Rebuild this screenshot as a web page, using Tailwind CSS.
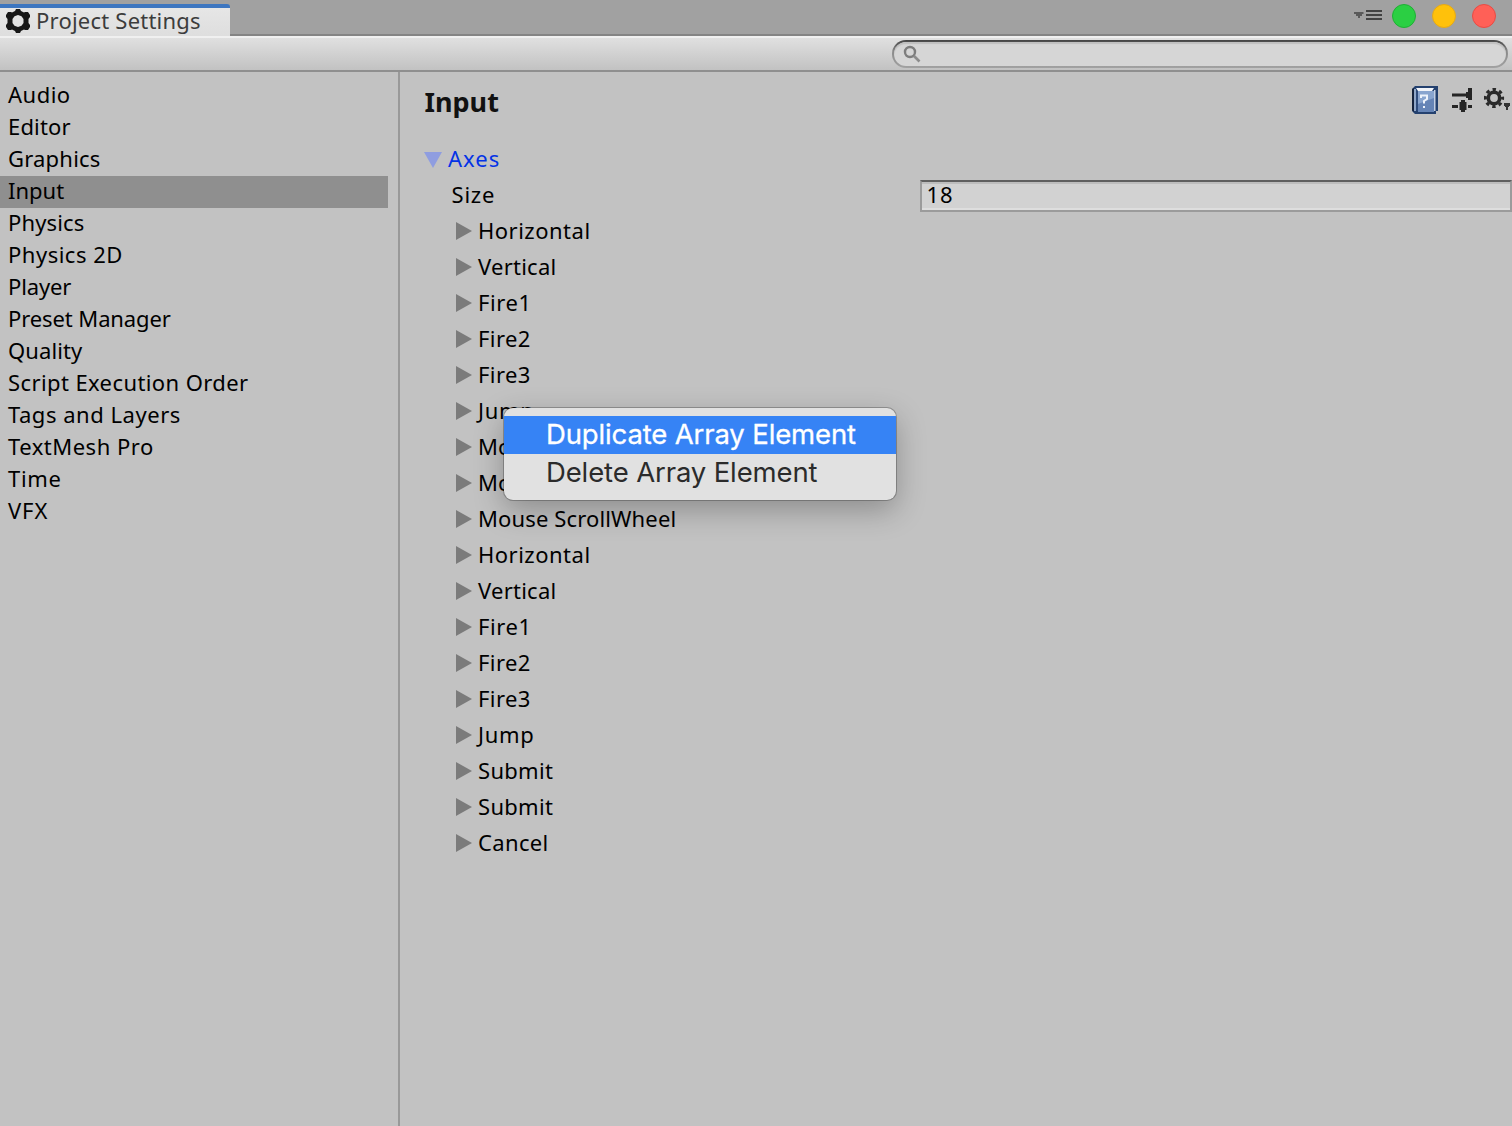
<!DOCTYPE html>
<html lang="en">
<head>
<meta charset="utf-8">
<title>Project Settings</title>
<script src="https://cdn.jsdelivr.net/npm/@tailwindcss/browser@4"></script>
</head>
<body class="flex h-[1126px] w-[1512px] flex-col overflow-hidden bg-[#c2c2c2] font-['Noto_Sans',sans-serif] text-[22px] text-black">

<!-- Tab bar -->
<header class="flex h-9 shrink-0 items-end justify-between bg-[#a1a1a1] shadow-[inset_0_-2px_0_#848484]">
  <div class="flex h-8 w-[230px] items-start rounded-tr-[3px] border-t-4 border-[#3d76c0] bg-linear-to-b from-[#e6e6e6] to-[#dedede] pl-1.5 text-[#3c3c3c]">
    <svg class="mt-px h-6 w-6 shrink-0" viewBox="0 0 24 24"><path fill="#171717" fill-rule="evenodd" d="M10 0h4l1 2 3 1.500 1-.5h3l2 3v2l-1.500 2v4l1.500 2v2l-2 3h-3l-1-.5L15 22l-1 2h-4l-1-2-3-1.500-1 .5H2l-2-3v-2l1.500-2v-4L0 8V6l2-3h3l1 .5L9 2zM12 6L8.500 7.200 6.500 10v4l2 2.800L12 18l3.500-1.200 2-2.800v-4l-2-2.800z"/></svg>
    <span class="ml-1.5 leading-[24px] tracking-[.22px] whitespace-nowrap">Project Settings</span>
  </div>
  <div class="flex h-9 items-start pt-1 pr-4">
    <svg class="mt-[5px] mr-[10px] h-3 w-7" viewBox="0 0 28 12"><path fill="#5a5a5a" d="M0 3h9.500v2H8v2H6v2H4V7H2V5H0z"/><path fill="#424242" d="M12 1h16v2H12zM12 5h16v2H12zM12 9h16v2H12z"/></svg>
    <div class="mr-4 h-6 w-6 rounded-full border border-[#1fb034] bg-[#2bcf43]"></div>
    <div class="mr-4 h-6 w-6 rounded-full border border-[#e5a917] bg-[#ffc10b]"></div>
    <div class="h-6 w-6 rounded-full border border-[#e84b44] bg-[#ff6057]"></div>
  </div>
</header>

<!-- Toolbar with search -->
<div class="flex h-9 shrink-0 items-start justify-end border-t-2 border-b-2 border-t-[#f0f0f0] border-b-[#8f8f8f] bg-linear-to-b from-[#e0e0e0] to-[#c2c2c2] pt-0.5 pr-1">
  <div class="h-7 w-[616px] rounded-full bg-linear-to-b from-[#454545] via-[#8a8a8a] via-40% to-[#a2a2a2] p-0.5">
    <div class="flex h-6 items-start rounded-full bg-[#d6d6d6] pt-[3px] pl-[9px] shadow-[inset_0_2px_1px_#c0c0c0]">
      <svg class="h-[18px] w-[18px]" viewBox="0 0 18 18" fill="none"><circle cx="7" cy="7" r="5" stroke="#7d7d7d" stroke-width="2.400"/><path d="M11 11l5.500 5.500" stroke="#8c8c8c" stroke-width="2.600"/></svg>
    </div>
  </div>
</div>

<div class="flex grow">
  <!-- Categories -->
  <nav class="w-[400px] shrink-0 border-r-2 border-[#999] pt-2 leading-[29px] whitespace-nowrap *:h-8 *:w-[388px] *:pl-2">
    <div class="tracking-[.5px]">Audio</div>
    <div class="tracking-[.15px]">Editor</div>
    <div class="tracking-[.2px]">Graphics</div>
    <div class="bg-[#8f8f8f]">Input</div>
    <div class="tracking-[.15px]">Physics</div>
    <div class="tracking-[.5px]">Physics 2D</div>
    <div class="tracking-[-.15px]">Player</div>
    <div class="tracking-[-.1px]">Preset Manager</div>
    <div class="tracking-[.1px]">Quality</div>
    <div class="tracking-[.4px]">Script Execution Order</div>
    <div class="tracking-[.53px]">Tags and Layers</div>
    <div class="tracking-[.5px]">TextMesh Pro</div>
    <div class="tracking-[.7px]">Time</div>
    <div class="tracking-[.9px]">VFX</div>
  </nav>

  <!-- Inspector -->
  <main class="grow">
    <div class="flex h-[69px] items-start justify-between pr-0.5 pl-[24.500px]">
      <h1 class="mt-3 text-[27px] leading-9 font-bold text-[#111]">Input</h1>
      <div class="mt-3.5 flex items-start">
        <svg class="mr-3.5 h-7 w-[26px]" viewBox="0 0 26 28">
          <path fill="#24416f" d="M0 3l3-3h23v25h-2v3H3l-3-3z"/>
          <path fill="#15233d" d="M0 3l2-1v24l-2-2z"/>
          <path fill="#8fa6c8" d="M2 3h2v22H2z"/>
          <path fill="#f1f4f9" d="M4 2h18l-2 3H6z"/>
          <path fill="#2d4b7c" d="M4 4l3 2v20l-3-2z"/>
          <path fill="#6584b6" d="M6 5h16v21H6z"/>
          <path fill="#89a5cf" d="M6 5h16v7L6 18z"/>
          <path fill="#c3d0e4" d="M22 4h1.500v21H22z"/>
          <path fill="none" stroke="#eef3fb" stroke-width="2" d="M9 12V9.500h6V13l-3 2v2.500M11 21h2"/>
        </svg>
        <svg class="mt-0.5 mr-3 h-6 w-5" viewBox="0 0 20 24"><g fill="#252525"><path d="M0 5.500h14v3H0zM16 0h4v12h-4zM14 4h2v6h-2zM0 17h6v3H0zM9 12h4v12H9zM7.500 14h7v8h-7zM16 17h4v3h-4z"/></g></svg>
        <svg class="mt-0.5 h-6 w-[26px]" viewBox="0 0 26 24"><g fill="none" stroke="#2a2a2a"><circle cx="10" cy="10" r="5.700" stroke-width="3.600"/><circle cx="10" cy="10" r="8.600" stroke-width="3" stroke-dasharray="3.400 3.354" stroke-dashoffset="1.700"/></g><path fill="#333" d="M20 15h6v3h-1v1h-1v3h-2v-3h-1v-1h-1z"/></svg>
      </div>
    </div>

    <div class="leading-[35px] whitespace-nowrap">
      <div class="flex h-9 pl-6 tracking-[1px] text-[#0433e6]"><svg class="mt-[11px] mr-1.5 h-4 w-[18px]" viewBox="0 0 18 16"><path fill="#8f9de0" d="M0 0h18L9 16z"/></svg>Axes</div>
      <div class="flex h-9 pl-[51.500px]">
        <div class="w-[468.500px] tracking-[.8px]">Size</div>
        <div class="mt-[3px] h-8 grow border-2 border-[#9b9b9b] border-t-[#5f5f5f] bg-[#d2d2d2] pl-[4.500px] leading-[25px] tracking-[1px] shadow-[inset_0_2px_0_#bdbdbd,inset_0_-2px_0_#dedede]">18</div>
      </div>
      <div id="axes"></div>
    </div>
  </main>
</div>

<!-- Context menu -->
<div class="absolute top-[408px] left-[504px] h-[92px] w-[392px] overflow-hidden rounded-[9px] bg-[#e1e1e1] pt-2 font-[Inter,sans-serif] text-[27.500px] leading-9 whitespace-nowrap *:h-[38px] *:pl-[42px]">
  <div class="bg-[#3683f5] tracking-[-.14px] text-white [-webkit-text-stroke:.3px_white]">Duplicate Array Element</div>
  <div class="tracking-[-.13px] text-[#2b2b2b]">Delete Array Element</div>
</div>
<div class="absolute top-[408px] left-[504px] h-[92px] w-[392px] rounded-[9px] shadow-[0_0_0_1px_rgba(0,0,0,.24),0_10px_30px_rgba(0,0,0,.28)]"></div>

<script>
  const axes = [
    ["Horizontal", .5], ["Vertical", .25], ["Fire1", .6], ["Fire2", .4], ["Fire3", .4], ["Jump", .7],
    ["Mouse X", .15], ["Mouse Y", .15], ["Mouse ScrollWheel", .13],
    ["Horizontal", .5], ["Vertical", .25], ["Fire1", .6], ["Fire2", .4], ["Fire3", .4], ["Jump", .7],
    ["Submit", .3], ["Submit", .3], ["Cancel", .35]
  ];
  document.getElementById("axes").innerHTML = axes.map(([name, spacing]) =>
    `<div class="flex h-9 pl-14" style="letter-spacing:${spacing}px"><svg class="mt-[9px] mr-1.5 h-[18px] w-4 shrink-0" viewBox="0 0 16 18"><path fill="#7b7b7b" d="M0 0l16 9L0 18z"/></svg>${name}</div>`
  ).join("");
</script>
</body>
</html>
